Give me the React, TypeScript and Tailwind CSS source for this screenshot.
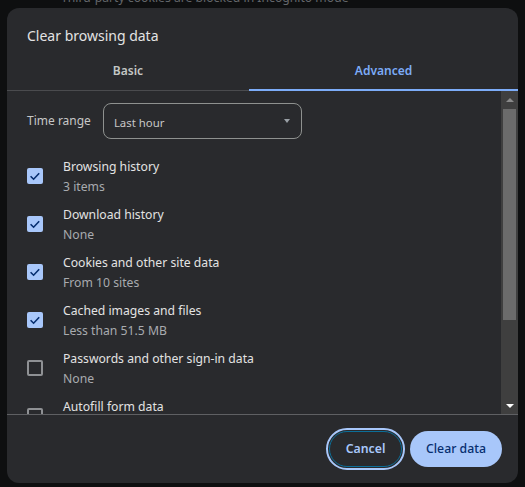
const items = [
  { label: 'Browsing history', sub: '3 items', checked: true },
  { label: 'Download history', sub: 'None', checked: true },
  { label: 'Cookies and other site data', sub: 'From 10 sites', checked: true },
  { label: 'Cached images and files', sub: 'Less than 51.5 MB', checked: true },
  { label: 'Passwords and other sign-in data', sub: 'None', checked: false },
  { label: 'Autofill form data', sub: 'None', checked: false },
]

function Checkbox({ checked }: { checked: boolean }) {
  if (!checked) {
    return <div className="h-4 w-4 shrink-0 rounded-[2px] border-2 border-[#8f9194]" />
  }
  return (
    <div className="flex h-4 w-4 shrink-0 items-center justify-center rounded-[2px] bg-[#a8c7fa]">
      <svg viewBox="0 0 16 16" className="h-4 w-4" fill="none" stroke="#062e6f" strokeWidth="1.6">
        <path d="M3.6 8.2l3 3 5.6-6" />
      </svg>
    </div>
  )
}

function Row({ label, sub, checked }: { label: string; sub: string; checked: boolean }) {
  return (
    <div className="flex h-12 shrink-0 items-center pl-5">
      <Checkbox checked={checked} />
      <div className="ml-5 mt-[2px] flex flex-col text-[12.2px] leading-5">
        <span className="text-[#e3e3e3]">{label}</span>
        <span className="text-[#a8abaf]">{sub}</span>
      </div>
    </div>
  )
}

export default function App() {
  return (
    <div className="flex h-[487px] w-[525px] flex-col overflow-hidden bg-[#0e0f10] font-['Noto_Sans',sans-serif]">
      {/* page text behind the dialog, mostly cut off */}
      <div className="h-2 shrink-0 overflow-hidden pl-[61px] text-[12.2px] leading-[8px] text-[#63666a]">
        <div className="-mt-[6px]">Third-party cookies are blocked in Incognito mode</div>
      </div>

      <div className="ml-[7px] flex h-[475px] w-[511px] flex-col overflow-hidden rounded-xl bg-[#292a2d]">
        <div className="h-[42px] shrink-0 pl-5 pt-4 text-[14px] leading-[24px] text-[#e3e3e3]">Clear browsing data</div>

        <div className="flex h-[41px] shrink-0 border-b border-[#4a4b4e] text-[12px] font-semibold">
          <div className="flex w-[242px] items-center justify-center pt-[2px] text-[#c4c7c5]">Basic</div>
          <div className="-mb-px flex flex-1 items-center justify-center border-b-2 border-[#7cacf8] pt-[3px] text-[#7cacf8]">Advanced</div>
        </div>

        <div className="flex min-h-0 flex-1 border-b border-[#5f6063]">
          <div className="flex min-w-0 flex-1 flex-col overflow-hidden">
            <div className="flex shrink-0 items-center pl-5 pt-3 pb-[11px]">
              <span className="text-[12px] text-[#c7c7c7]">Time range</span>
              <div className="ml-[12px] flex h-9 w-[199px] items-center justify-between rounded-lg border border-[#8e918f] pl-[10px] pr-[11px] text-[11.4px] text-[#c7c7c7]">
                <span className="pt-[3px]">Last hour</span>
                <span className="h-0 w-0 border-x-[3.5px] border-t-[4px] border-x-transparent border-t-[#9aa0a6]" />
              </div>
            </div>
            <div className="flex flex-col pt-[2px]">
              {items.map((item) => (
                <Row key={item.label} {...item} />
              ))}
            </div>
          </div>

          <div className="flex w-[17px] shrink-0 flex-col bg-[#3f3f3f]">
            <div className="flex h-[18px] shrink-0 items-center justify-center">
              <span className="h-0 w-0 border-x-[4px] border-b-[4px] border-x-transparent border-b-[#8a8a8a]" />
            </div>
            <div className="ml-[2px] h-[211px] w-[13px] shrink-0 bg-[#6b6b6b]" />
            <div className="flex-1" />
            <div className="flex h-[17px] shrink-0 items-center justify-center">
              <span className="h-0 w-0 border-x-[4px] border-t-[4px] border-x-transparent border-t-[#ffffff]" />
            </div>
          </div>
        </div>

        <div className="flex h-[68px] shrink-0 items-start justify-end gap-2 pr-4 pt-4 text-[12.3px] font-medium">
          <button className="h-9 w-[73px] rounded-full border border-[#0b6e99] pt-[1px] font-semibold text-[#a8c7fa] outline-2 outline-offset-[1px] outline-[#a8c7fa]">Cancel</button>
          <button className="h-9 w-[92px] rounded-full bg-[#a8c7fa] pt-[1px] text-[#062e6f]">Clear data</button>
        </div>
      </div>
    </div>
  )
}
